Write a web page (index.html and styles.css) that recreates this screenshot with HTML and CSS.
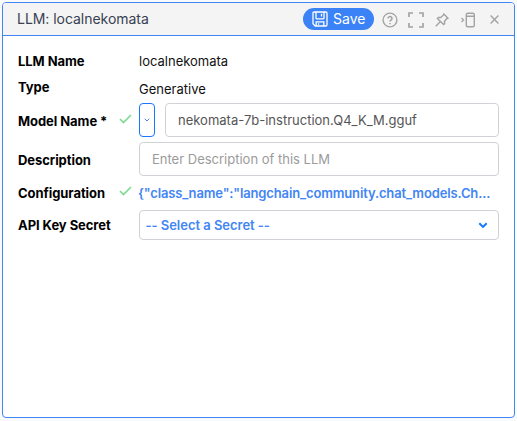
FILE: index.html
```html
<!DOCTYPE html>
<html lang="en">
<head>
<meta charset="utf-8">
<title>LLM: localnekomata</title>
<link rel="stylesheet" href="styles.css">
</head>
<body>
<section class="panel">
  <header class="panel-header">
    <h1 class="title">LLM: localnekomata</h1>
    <button class="save" type="button">
      <svg width="16" height="16" viewBox="0 0 16 16"><path d="M2.2 1h11.6q1.2 0 1.2 1.2v11.6q0 1.2-1.2 1.2H3.2L1 12.8V2.2Q1 1 2.2 1zM4 1v6q0 .8.8.8h6.4q.8 0 .8-.8V1M4.200 15v-4.200h7.600V15M6.600 12.200v1.600M9.500 2.800v2.600"/></svg>
      <span>Save</span>
    </button>
    <svg class="tool help" width="16" height="16" viewBox="0 0 16 16"><circle cx="8" cy="8" r="6.900"/><path class="mark" d="M6 6.500a2 1.900 0 1 1 3.100 1.500Q8 8.600 8 9.400M8 11v1.200"/></svg>
    <svg class="tool expand" width="16" height="16" viewBox="0 0 16 16"><path d="M1 5V1h4M11 1h4v4M15 11v4h-4M5 15H1v-4"/></svg>
    <svg class="tool pin" width="14" height="14" viewBox="0 0 14 14"><path d="M8.800 1l4.200 4.200-1.200.5-2.300 2.600.1 2.300-1 1L2.400 5.400l1-1 2.300.1 2.600-2.300zM5.200 8.800L.8 13.200"/></svg>
    <svg class="tool dock" width="14" height="16" viewBox="0 0 14 16"><path d="M.5 6l2 2-2 2M6.800 1.200h5q1.500 0 1.500 1.500v10.600q0 1.500-1.500 1.500h-5q-1.500 0-1.500-1.500V2.700q0-1.500 1.500-1.500zM5.300 4.300h8"/></svg>
    <svg class="tool close" width="9" height="9" viewBox="0 0 9 9"><path d="M.6.6l7.800 7.800M8.400.6L.6 8.400"/></svg>
  </header>
  <div class="form">
    <div class="label">LLM Name</div>
    <div class="value">localnekomata</div>

    <div class="label type-label">Type</div>
    <div class="value type-value">Generative</div>

    <div class="label model-label"><span>Model Name *</span><svg class="check" width="13" height="10" viewBox="0 0 13 10"><path d="M1 5l3.500 3.500L12 1"/></svg></div>
    <div class="model">
      <button class="picker" type="button" aria-label="Choose model"><svg width="6" height="4" viewBox="0 0 6 4"><path d="M.7.700L3 3 5.300.700"/></svg></button>
      <div class="input">nekomata-7b-instruction.Q4_K_M.gguf</div>
    </div>

    <div class="label description">Description</div>
    <div class="input placeholder">Enter Description of this LLM</div>

    <div class="label"><span>Configuration</span><svg class="check" width="13" height="10" viewBox="0 0 13 10"><path d="M1 5l3.500 3.500L12 1"/></svg></div>
    <div class="config">{"class_name":"langchain_community.chat_models.Ch...</div>

    <div class="label">API Key Secret</div>
    <div class="select"><span>-- Select a Secret --</span><svg width="10" height="7" viewBox="0 0 10 7"><path d="M1.300 1.300L5 4.900l3.700-3.600"/></svg></div>
  </div>
</section>
</body>
</html>
```

FILE: styles.css
```css
* { box-sizing: border-box; }
body {
  margin: 0;
  padding: 2px;
  height: 421px;
  background: #f8fafc;
  color: #111;
  font: 13px/20px Inter, "Liberation Sans", sans-serif;
}
svg { display: block; flex: none; fill: none; stroke: currentColor; }
button { font: inherit; padding: 0; }
.panel {
  width: 513px;
  height: 416px;
  border: 1px solid #4285f4;
  border-radius: 4px;
  background: #fff;
  overflow: hidden;
}
.panel-header {
  display: flex;
  align-items: center;
  height: 33px;
  padding: 0 15px 0 14px;
  border-bottom: 1px solid #4285f4;
  background: #f4f4f4;
}
.title {
  flex: 1;
  margin: 0;
  color: #374151;
  font-size: 14px;
  font-weight: 400;
  letter-spacing: -0.04px;
}
.save {
  display: flex;
  align-items: center;
  gap: 5px;
  width: 71px;
  height: 22px;
  padding-left: 9px;
  border: 0;
  border-radius: 11px;
  background: #3b82f6;
  color: #fff;
  font-size: 14px;
}
.save svg { stroke-width: 1.3; }
.tool { color: #a3a3a3; stroke-width: 1.4; }
.help { margin: 2px 0 0 8px; }
.mark { stroke-width: 1.5; }
.expand { margin: 2px 0 0 10px; stroke-width: 1.7; }
.pin { margin: 2px 0 0 11px; }
.dock { margin: 2px 0 0 12px; }
.close { margin: 1px 0 0 15px; }
.form {
  display: grid;
  grid-template-columns: 121px 360px;
  grid-template-rows: 26px 29px 34px 39px 34px 30px;
  align-items: center;
  padding: 12px 15px;
}
.label {
  display: flex;
  align-items: center;
  justify-content: space-between;
  padding-right: 7px;
  color: #000;
  font-weight: 700;
  letter-spacing: -0.06px;
}
.type-label { padding-bottom: 3px; }
.type-value { padding-top: 1px; }
.model-label { padding-top: 2px; }
.check { color: #7ddc91; stroke-width: 1.7; margin-bottom: 4px; }
.model { display: flex; gap: 10px; }
.picker {
  display: flex;
  align-items: center;
  justify-content: center;
  width: 16px;
  height: 34px;
  border: 1px solid #1677ff;
  border-radius: 4px;
  background: #fff;
  color: #4285f4;
}
.input {
  flex: 1;
  height: 34px;
  padding: 6px 12px;
  border: 1px solid #d1d1d8;
  border-radius: 4px;
  color: #555;
}
.description { padding-top: 6px; }
.placeholder { margin-top: 5px; color: #9b9b9b; }
.config {
  margin-left: -1px;
  color: #4285f4;
  font-weight: 600;
  letter-spacing: -0.14px;
  white-space: nowrap;
}
.select {
  display: flex;
  align-items: center;
  justify-content: space-between;
  height: 30px;
  padding: 0 10px 0 5.5px;
  border: 1px solid #d1d1d8;
  border-radius: 4px;
  color: #4285f4;
  font-weight: 600;
  letter-spacing: -0.03px;
}
.select svg { color: #1677ff; stroke-width: 2.1; }
```
